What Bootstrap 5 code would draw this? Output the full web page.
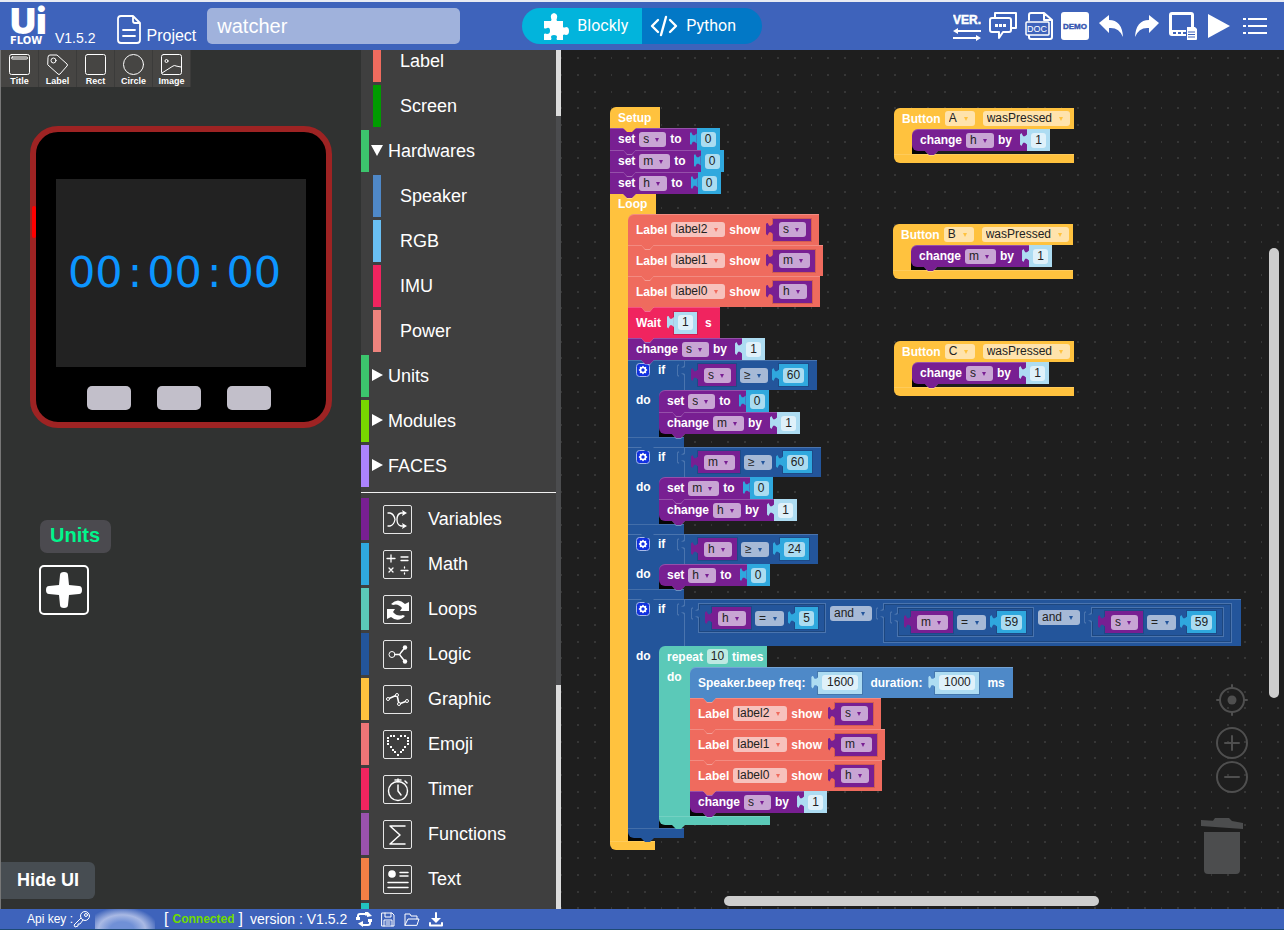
<!DOCTYPE html>
<html lang="en">
<head>
<meta charset="utf-8">
<meta name="viewport" content="width=device-width, initial-scale=1">
<title>UiFlow</title>
<link href="https://cdn.jsdelivr.net/npm/bootstrap@5.3.0/dist/css/bootstrap.min.css" rel="stylesheet">
<style>
body{font-family:"Liberation Sans",Arial,sans-serif;color:#fff;background:#1e1e1e;overflow:hidden}
svg{display:block;flex:none}
button{font-family:inherit}
.plain{background:none;border:0;padding:0;color:inherit}
.line{fill:none;stroke:currentColor;stroke-linecap:round;stroke-linejoin:round}
/* top bar */
.topbar{height:50px;background:#3e63bb;border-top:2px solid #e8ebf3;padding:0 15px 0 10px}
.logo-ui{font:900 36px/28px Inter,sans-serif}
.logo-flow{font:700 10px/10px "DejaVu Sans",sans-serif}
.logo{width:45px;color:#fff;text-decoration:none;gap:1px}
.ver{font-size:14px;line-height:16px}
.proj-btn{margin:0 0 6px 22px;gap:5px}
.proj{font-size:16px;line-height:20px;margin-bottom:-2px}
.name-box{width:253px;height:36px;margin-left:11px;background:#a0b2dc;border:0;border-radius:5px;color:#fff;font-size:20px;padding:0 10px}
.mode{width:120px;height:36px;font:16px/20px Roboto,sans-serif;color:#fff;border:0;border-radius:0}
.mode-a{background:#02b4dc;border-radius:18px 0 0 18px}
.mode-b{background:#0278c6;border-radius:0 18px 18px 0}
.mode-wrap{margin-left:62px}
/* designer */
.designer{width:361px;background:#303231;border-left:1px solid #777}
.tile{width:38px;height:37px;background:#464543;border:0;border-right:1px solid #3b3b3a;color:#fff;font-size:9px;font-weight:700;line-height:10px;padding:4px 0 0;gap:1px}
.device{width:302px;height:302px;margin:39px 0 0 29px;background:#000;border:6px solid #9e2323;border-radius:28px;padding-top:47px}
.power{left:-4px;top:74px;width:4px;height:32px;background:#f00;border-radius:2px}
.lcd{width:250px;height:188px;background:#222;padding:0 0 2px 12px;color:#0c95ff;font:43px/50px "DejaVu Sans",sans-serif;gap:5px}
.keys{margin-top:19px;gap:26px}
.key{width:44px;height:24px;background:#c2bfca;border:0;border-radius:5px}
.units{margin:92px 0 12px 39px;padding:0 11px 0 10px;height:33px;background:#4b4a4f;border-radius:7px;color:#00f68c;font-size:20px;line-height:30px;font-weight:700}
.add{width:50px;height:50px;margin-left:38px;border:2px solid #fff;border-radius:5px}
.hide-ui{width:94px;height:37px;margin-bottom:10px;background:#474d52;border-radius:0 6px 6px 0;font-size:18px;font-weight:700}
/* toolbox */
.toolbox{width:200px;background:#3f3f3f}
.tree{margin-top:-10px}
.cat{height:45px;color:#fff;text-decoration:none;font-size:18px;line-height:20px}
.cat:hover{color:#fff}
.cat i{width:8px;height:42px;background:var(--k);margin-right:2px;flex:none}
.cat.kid{padding-left:12px}
.cat.kid i{margin-right:19px}
.cat .arrow{width:14px;margin-right:3px}
.cat .pic{margin:0 16px 2px 12px;width:29px;height:29px;border:1px solid #e6e6e6;border-radius:2px;display:flex;align-items:center;justify-content:center}
.cat .cap{padding-bottom:3px}
.rule{height:1px;background:#f2f2f2;margin:2px 0 5px}
.scroll{width:5px;background:#4b4c4e}
.scroll b{background:#dcdcdc}
/* workspace */
.space{background:#1e1e1e url("data:image/svg+xml,%3Csvg xmlns='http://www.w3.org/2000/svg' width='50' height='50' fill='%23363636'%3E%3Cpath d='M0 7h1v2H0zM16 7h2v2h-2zM33 7h2v2h-2zM0 24h1v2H0zM16 24h2v2h-2zM33 24h2v2h-2zM0 41h1v2H0zM16 41h2v2h-2zM33 41h2v2h-2z'/%3E%3C/svg%3E")}
.stack{position:absolute;font-size:12px;font-weight:700;line-height:14px;white-space:nowrap}
.yel{--c:#ffc23e;--f:#ffe3ac}
.pur{--c:#781f92;--f:#c8a5d4}
.cor{--c:#ef6b5e;--f:#f7c2bd}
.num{--c:#2fa8de;--f:#aadcf1}
.dft{--c:#addcf2;--f:#dff1fa}
.wai{--c:#f0245f;--f:#f9a7bf}
.lgc{--c:#23559b;--f:#a6b9d6}
.rep{--c:#5bc9b8;--f:#bde9e2}
.spk{--c:#4e89c8;--f:#b8d0e9}
.st{position:relative;display:flex;align-items:center;gap:4px;width:max-content;height:22px;padding-left:8px;background:var(--c);box-shadow:inset 0 1px 0 rgba(255,255,255,.22)}
.st.tall{height:31px;padding-right:8px}
.st::before,.st::after,.foot.nub::after{content:"";position:absolute;left:13px;bottom:-4px;width:13px;height:4px;z-index:2;background:rgba(255,255,255,.35);clip-path:polygon(0 0,100% 0,69% 100%,31% 100%)}
.st::before{bottom:-5px;height:5px}
.st::after,.foot.nub::after{background:var(--c)}
.head{height:21px;display:flex;align-items:center;gap:4px;width:max-content;padding:0 9px 0 8px;background:var(--c);position:relative}
.head.low{height:20px}
.head.hat{border-top-left-radius:6px}
.head.nub::after{content:"";position:absolute;left:13px;bottom:-4px;width:13px;height:4px;z-index:2;background:var(--c);clip-path:polygon(0 0,100% 0,69% 100%,31% 100%)}
.arm{width:18px;background:var(--c);flex:none;line-height:20px}
.arm.mid{width:31px;padding-left:8px}
.mouth{padding-bottom:3px;background:linear-gradient(var(--c),var(--c)) 0 0/8px 8px no-repeat,linear-gradient(#060606,#060606) 0 100%/24px 9px no-repeat}
.mouth>.st:last-child{border-bottom-left-radius:6px}
.mouth>.st:first-child,.mouth>.cb:first-child>.head{border-top-left-radius:6px}
.foot{height:9px;background:var(--c);position:relative;box-shadow:inset 0 1px 0 rgba(255,255,255,.15)}
.foot.end{border-bottom-left-radius:6px}
.foot.w45{width:45px}.foot.w56{width:56px;height:10px}.foot.w111{width:111px}
.v{position:relative;display:flex;align-items:center;height:22px;gap:4px;margin-left:7px;padding:0 5px 0 6px;background:var(--c);box-shadow:0 0 0 1px rgba(0,0,0,.13)}
.v::before{content:"";position:absolute;left:-7px;top:4px;width:7px;height:13px;background:var(--c);clip-path:polygon(100% 12%,70% 25%,45% 25%,20% 0,0 12%,0 88%,20% 100%,45% 75%,70% 75%,100% 88%)}
.v.num,.v.dft{padding:0 4px}
.t+.v{margin-left:9px}
.st:not(.tall)>.t+.v{margin-left:11px;box-shadow:none}
.cmp{height:30px;padding:0 8px 0 7px;box-shadow:inset 0 0 0 1px #4a74ae,inset 0 0 0 2px #1d4780}
.cmp.bare{margin:0;padding-right:9px;box-shadow:inset 0 1px 0 #4a74ae,inset 1px 0 0 #4a74ae}
.cmp.deep{height:40px;align-items:flex-start;padding-top:4px}
.cmp.root{height:47px;align-items:flex-start;padding-top:4px}
.op{margin-top:3px}
.cmp::before{background:#4a74ae}
.cmp::after{content:"";position:absolute;left:-6px;top:5px;width:8px;height:11px;background:var(--c);clip-path:polygon(100% 12%,70% 25%,45% 25%,20% 0,0 12%,0 88%,20% 100%,45% 75%,70% 75%,100% 88%)}
.if{width:56px;padding:3px 0 0 8px;gap:8px;background:var(--c);box-shadow:inset 0 1px 0 #4a74ae}
.stack select,.stack input{height:15px;border:0;border-radius:3px;background:var(--f);color:#222;font:12px/15px "Liberation Sans",Arial,sans-serif;padding:0;outline:0}
.stack select{appearance:none;padding:0 17px 0 4px}
.stack .d{position:relative;display:inline-flex}
.d::after{content:"";position:absolute;right:7px;top:6px;border:solid transparent;border-width:4px 2px 0;border-top-color:var(--c);pointer-events:none}
.stack input{text-align:center;width:15px}
.stack input.n2{width:21px}
.stack input.n4{width:36px}
.bar-v{right:5px;top:23%;width:10px;height:450px;border-radius:5px;background:#cecece}
.bar-h{left:163px;bottom:3px;width:375px;height:10px;border-radius:5px;background:#cecece}
.tools{right:36px;bottom:34px;width:46px;color:#4f4f4f}
/* status bar */
.status{height:21px;background:#3e63bb;border-bottom:1px solid #1e4a74;font-size:12px;line-height:16px;padding-left:27px}
.smear{width:60px;height:20px;background:radial-gradient(ellipse at 45% 100%,#7090d6 0 25%,#a9b9e4 50%,#5d7cc6 70%,transparent 78%);margin-right:9px}
</style>
</head>
<body class="vh-100 d-flex flex-column">

<header class="topbar d-flex align-items-center flex-shrink-0">
  <a href="#" class="logo d-flex flex-column"><span class="logo-ui">Ui</span><span class="logo-flow">FLOW</span></a>
  <span class="ver align-self-end mb-1">V1.5.2</span>
  <button class="plain proj-btn d-flex align-items-end align-self-end">
    <svg width="24" height="29" viewBox="0 0 24 29" class="line" stroke-width="1.8"><path d="M16 1H4a3 3 0 0 0-3 3v21a3 3 0 0 0 3 3h16a3 3 0 0 0 3-3V8zM16 1v5q0 2 2 2h5M6 15h12M6 21h12"/></svg>
    <span class="proj">Project</span>
  </button>
  <input class="name-box" value="watcher" aria-label="Project name">
  <div class="mode-wrap d-flex">
    <button class="mode mode-a d-flex align-items-center ps-3 pe-0"><svg class="ms-1 me-2" width="27" height="27" viewBox="0 0 27 27" fill="#fff"><path d="M2 8h7q1-1 0-3Q8 1 12 0q4 1 3 5-1 2 0 3h6v6q1 1 3 0 3 0 3 4 0 4-3 4-2-1-3 0v5h-6q-1-1 0-3 0-2-3-2t-3 2q1 2 0 3H2v-6q1-1 3 0 3 0 3-3 0-4-3-3-2 1-3 0z"/></svg>Blockly</button>
    <button class="mode mode-b d-flex align-items-center ps-2 pe-0"><svg class="me-2" width="28" height="22" viewBox="0 0 28 22"><path class="line" stroke-width="2.4" d="M8 5 2 11l6 6M20 5l6 6-6 6M16 2l-5 18"/></svg>Python</button>
  </div>
  <nav class="d-flex align-items-center gap-2 ms-auto" aria-label="Tools">
    <button class="plain" aria-label="Version"><svg width="28" height="30" viewBox="0 0 28 30"><text x="0" y="13" fill="#fff" stroke="#fff" stroke-width=".5" font-family="Liberation Sans,sans-serif" font-weight="700" font-size="12">VER.</text><g fill="#fff"><path d="M0 20l5-3v2h23v2H5v2zM28 27l-5-3v2H0v2h23v2z"/></g></svg></button>
    <button class="plain" aria-label="Feedback"><svg width="28" height="28" viewBox="0 0 28 28"><path class="line" stroke-width="2" d="M6 5V1h21v15h-4M3 6h17q2 0 2 2v10q0 2-2 2h-6l-4 6v-6H3q-2 0-2-2V8q0-2 2-2z"/><path fill="#fff" d="M6 12h3v3H6zM10 12h3v3h-3zM14 12h3v3h-3z"/></svg></button>
    <button class="plain" aria-label="Documents"><svg width="28" height="28" viewBox="0 0 28 28"><path class="line" stroke-width="2" d="M4 8V3q0-2 2-2h13l8 7v17q0 2-2 2H6q-2 0-2-2v-2M19 1v7h8"/><rect x="1" y="10" width="23" height="13" rx="1" fill="#3e63bb" stroke="#fff" stroke-width="1.5"/><text x="2" y="20" fill="#fff" font-family="Liberation Sans,sans-serif" font-size="9">DOC</text></svg></button>
    <button class="plain" aria-label="Demo"><svg width="28" height="28" viewBox="0 0 28 28"><rect width="28" height="28" rx="3" fill="#fff"/><text x="14" y="17" text-anchor="middle" fill="#3454b0" stroke="#3454b0" stroke-width=".4" font-family="Liberation Sans,sans-serif" font-weight="700" font-size="8">DEMO</text></svg></button>
    <button class="plain" aria-label="Undo"><svg width="28" height="28" viewBox="0 0 28 28"><path fill="#fff" d="M2 11 12 3v5q13 0 14 17-4-10-14-9v5z"/></svg></button>
    <button class="plain" aria-label="Redo"><svg width="28" height="28" viewBox="0 0 28 28"><path fill="#fff" d="M26 11 16 3v5Q3 8 2 25q4-10 14-9v5z"/></svg></button>
    <button class="plain" aria-label="Device"><svg width="28" height="28" viewBox="0 0 28 28"><path fill="#fff" fill-rule="evenodd" d="M3 0h19q3 0 3 3v12h-3V3H3v15h14v6H3q-3 0-3-3V3q0-3 3-3zM4 20v2h3v-2zM9 20v2h3v-2zM14 20v2h3v-2z"/><path fill="#fff" d="M18 15h8l2 2v10q0 1-1 1h-9z"/><path stroke="#3e63bb" d="M19 20h7M19 22.500h7M19 25h7"/></svg></button>
    <button class="plain" aria-label="Run"><svg width="28" height="28" viewBox="0 0 28 28"><path fill="#fff" d="M3 2v24l22-12z"/></svg></button>
    <button class="plain" aria-label="Menu"><svg width="28" height="28" viewBox="0 0 28 28"><path fill="#fff" d="M2 6h3v2H2zM2 13h3v2H2zM2 20h3v2H2zM7 6h19v2H7zM7 13h19v2H7zM7 20h19v2H7z"/></svg></button>
  </nav>
</header>

<main class="d-flex flex-fill overflow-hidden">
  <section class="designer d-flex flex-column align-items-start flex-shrink-0">
    <div class="d-flex">
      <button class="tile d-flex flex-column align-items-center"><svg width="21" height="21" viewBox="0 0 21 21"><rect class="line" x=".5" y=".5" width="20" height="20" rx="2"/><rect class="line" x="2.500" y="3" width="16" height="2" rx="1"/></svg><span>Title</span></button>
      <button class="tile d-flex flex-column align-items-center"><svg width="21" height="21" viewBox="0 0 21 21"><path class="line" d="M1 3q0-2 2-2h7l10 9q1 1 0 2l-7 8q-1 1-2 0L1 11z"/><circle class="line" cx="6.500" cy="6.500" r="2.500"/></svg><span>Label</span></button>
      <button class="tile d-flex flex-column align-items-center"><svg width="21" height="21" viewBox="0 0 21 21"><rect class="line" x=".5" y=".5" width="20" height="20" rx="2"/></svg><span>Rect</span></button>
      <button class="tile d-flex flex-column align-items-center"><svg width="21" height="21" viewBox="0 0 21 21"><circle class="line" cx="10.500" cy="10.500" r="10"/></svg><span>Circle</span></button>
      <button class="tile d-flex flex-column align-items-center"><svg width="21" height="21" viewBox="0 0 21 21"><rect class="line" x=".5" y=".5" width="20" height="20" rx="2"/><circle class="line" cx="5.500" cy="7" r="1.500"/><path class="line" d="M1 19l11-7q2-1 3 0l5 1"/></svg><span>Image</span></button>
    </div>
    <div class="device position-relative d-flex flex-column align-items-center">
      <span class="power position-absolute"></span>
      <div class="lcd d-flex align-items-center"><span>00</span><span>:</span><span>00</span><span>:</span><span>00</span></div>
      <div class="keys d-flex pe-1"><button class="key" aria-label="A"></button><button class="key" aria-label="B"></button><button class="key" aria-label="C"></button></div>
    </div>
    <div class="units">Units</div>
    <button class="plain add d-flex align-items-center justify-content-center" aria-label="Add unit"><svg width="36" height="36" viewBox="0 0 36 36" fill="#fff"><path d="M14 3q0-3 4-3t4 3l1 10v10l-1 10q0 3-4 3t-4-3l-1-10V13z"/><path d="M3 14q-3 0-3 4t3 4l10 1h10l10-1q3 0 3-4t-3-4l-10-1H13z"/></svg></button>
    <button class="plain hide-ui mt-auto">Hide UI</button>
  </section>

  <nav class="toolbox d-flex flex-shrink-0 overflow-hidden" aria-label="Toolbox">
    <div class="tree flex-fill">
      <a href="#" class="cat kid d-flex" style="--k:#ef6b5e"><i></i><span class="cap align-self-center">Label</span></a>
      <a href="#" class="cat kid d-flex" style="--k:#009c00"><i></i><span class="cap align-self-center">Screen</span></a>
      <a href="#" class="cat d-flex" style="--k:#3cc56d"><i></i><svg class="arrow" height="42" viewBox="0 0 14 42"><path fill="#fff" d="M0 15h12L6 26z"/></svg><span class="cap align-self-center">Hardwares</span></a>
      <a href="#" class="cat kid d-flex" style="--k:#4f88c7"><i></i><span class="cap align-self-center">Speaker</span></a>
      <a href="#" class="cat kid d-flex" style="--k:#69bff3"><i></i><span class="cap align-self-center">RGB</span></a>
      <a href="#" class="cat kid d-flex" style="--k:#f0245f"><i></i><span class="cap align-self-center">IMU</span></a>
      <a href="#" class="cat kid d-flex" style="--k:#ee837d"><i></i><span class="cap align-self-center">Power</span></a>
      <a href="#" class="cat d-flex" style="--k:#3cc56d"><i></i><svg class="arrow" height="42" viewBox="0 0 14 42"><path fill="#fff" d="M1 14v12l11-6z"/></svg><span class="cap align-self-center">Units</span></a>
      <a href="#" class="cat d-flex" style="--k:#78d800"><i></i><svg class="arrow" height="42" viewBox="0 0 14 42"><path fill="#fff" d="M1 14v12l11-6z"/></svg><span class="cap align-self-center">Modules</span></a>
      <a href="#" class="cat d-flex" style="--k:#ac83ff"><i></i><svg class="arrow" height="42" viewBox="0 0 14 42"><path fill="#fff" d="M1 14v12l11-6z"/></svg><span class="cap align-self-center">FACES</span></a>
      <div class="rule"></div>
      <a href="#" class="cat d-flex" style="--k:#781f92"><i></i><span class="pic align-self-center"><svg width="21" height="21" viewBox="0 0 21 21"><path class="line" stroke-width="1.300" d="M1 4h2q4 1 5 6.500Q7 16 3 17H1M17 4h-3q-4 1-4 6.500t4 6.500h3"/><path fill="#fff" d="M15 1l5 3-5 3 1-3zM15 14l5 3-5 3 1-3z"/></svg></span><span class="cap align-self-center">Variables</span></a>
      <a href="#" class="cat d-flex" style="--k:#2fa8de"><i></i><span class="pic align-self-center"><svg width="23" height="21" viewBox="0 0 23 21"><path class="line" stroke-width="1.300" d="M5 1v7M1 4.500h8M15 3h7M15 6.500h7M3 14l4 4M7 14l-4 4M15 16.500h7M18.500 13v1M18.500 19v1"/></svg></span><span class="cap align-self-center">Math</span></a>
      <a href="#" class="cat d-flex" style="--k:#5bc9b8"><i></i><span class="pic align-self-center"><svg width="22" height="20" viewBox="0 0 22 20"><path fill="#fff" d="M4 4q7-7 14 0l4-2v9h-9l2-3q-4-5-9-3zM0 9h8l-2 3q4 5 10 3l2 1q-7 7-14 1l-4 2z"/></svg></span><span class="cap align-self-center">Loops</span></a>
      <a href="#" class="cat d-flex" style="--k:#23559b"><i></i><span class="pic align-self-center"><svg width="20" height="19" viewBox="0 0 20 19"><circle class="line" cx="4" cy="9.500" r="3"/><path class="line" stroke-width="1.500" d="M7 9.500h4q1 0 2-2l4-5M11 9.500q1 0 2 2l4 5"/><circle cx="17" cy="2.500" r="2.200" fill="#fff"/><circle cx="17" cy="16.500" r="2.200" fill="#fff"/></svg></span><span class="cap align-self-center">Logic</span></a>
      <a href="#" class="cat d-flex" style="--k:#ffc23e"><i></i><span class="pic align-self-center"><svg width="23" height="14" viewBox="0 0 23 14"><path class="line" stroke-width="1.600" d="M2 6l9-4 2 9 8-3"/><g fill="#3f3f3f" stroke="#fff"><circle cx="2" cy="6" r="1.500"/><circle cx="11" cy="2" r="1.500"/><circle cx="13" cy="11" r="1.500"/><circle cx="21" cy="8" r="1.500"/></g></svg></span><span class="cap align-self-center">Graphic</span></a>
      <a href="#" class="cat d-flex" style="--k:#ee7577"><i></i><span class="pic align-self-center"><svg width="22" height="22" viewBox="0 0 22 22"><path fill="#fff" d="M3 1h2v2H3zM6 1h2v2H6zM13 1h2v2h-2zM17 1h2v2h-2zM0 3h2v2H0zM0 6h2v2H0zM0 9h2v2H0zM20 3h2v2h-2zM20 6h2v2h-2zM20 9h2v2h-2zM10 4h2v2h-2zM3 12h2v2H3zM17 12h2v2h-2zM5 15h2v2H5zM15 15h2v2h-2zM7 17h2v2H7zM13 17h2v2h-2zM10 20h2v2h-2z"/></svg></span><span class="cap align-self-center">Emoji</span></a>
      <a href="#" class="cat d-flex" style="--k:#f0245f"><i></i><span class="pic align-self-center"><svg width="22" height="24" viewBox="0 0 22 24"><circle class="line" stroke-width="1.400" cx="11" cy="13" r="9.500"/><path class="line" stroke-width="1.500" d="M11 1v3M8 2h6M11 7v6l3 4M18 3l2 2"/></svg></span><span class="cap align-self-center">Timer</span></a>
      <a href="#" class="cat d-flex" style="--k:#9a52ad"><i></i><span class="pic align-self-center"><svg width="17" height="20" viewBox="0 0 17 20"><path class="line" stroke-width="1.500" d="M16 1H1l10 9L1 19h15"/></svg></span><span class="cap align-self-center">Functions</span></a>
      <a href="#" class="cat d-flex" style="--k:#f38045"><i></i><span class="pic align-self-center"><svg width="22" height="20" viewBox="0 0 22 20"><circle cx="5" cy="4" r="3.800" fill="#fff"/><path class="line" stroke-width="1.500" d="M13 2.500h8M13 6h8M1 12.500h20M1 17.500h20"/></svg></span><span class="cap align-self-center">Text</span></a>
      <a href="#" class="cat d-flex" style="--k:#22c4c0" aria-label="More"><i></i></a>
    </div>
    <div class="scroll d-flex flex-column"><b style="flex:66"></b><span style="flex:569"></span><b style="flex:224"></b></div>
  </nav>

  <section class="space position-relative flex-fill overflow-hidden">
    <!-- main program -->
    <div class="stack" style="left:49px;top:57px">
      <div class="yel head hat nub"><span>Setup</span></div>
      <div class="pur st"><span>set</span><span class="d"><select aria-label="variable"><option>s</option></select></span><span class="t">to</span><span class="v num"><input value="0" aria-label="number"></span></div>
      <div class="pur st"><span>set</span><span class="d"><select aria-label="variable"><option>m</option></select></span><span class="t">to</span><span class="v num"><input value="0" aria-label="number"></span></div>
      <div class="pur st"><span>set</span><span class="d"><select aria-label="variable"><option>h</option></select></span><span class="t">to</span><span class="v num"><input value="0" aria-label="number"></span></div>
      <div class="cb yel">
        <div class="head low">Loop</div>
        <div class="d-flex">
          <div class="arm"></div>
          <div class="mouth">
            <div class="cor st tall"><span>Label</span><span class="d"><select aria-label="label"><option>label2</option></select></span><span class="t">show</span><span class="v pur"><span class="d"><select aria-label="variable"><option>s</option></select></span></span></div>
            <div class="cor st tall"><span>Label</span><span class="d"><select aria-label="label"><option>label1</option></select></span><span class="t">show</span><span class="v pur"><span class="d"><select aria-label="variable"><option>m</option></select></span></span></div>
            <div class="cor st tall"><span>Label</span><span class="d"><select aria-label="label"><option>label0</option></select></span><span class="t">show</span><span class="v pur"><span class="d"><select aria-label="variable"><option>h</option></select></span></span></div>
            <div class="wai st tall"><span class="t">Wait</span><span class="v dft"><input value="1" aria-label="seconds"></span><span class="ms-1">s</span></div>
            <div class="pur st"><span>change</span><span class="d"><select aria-label="variable"><option>s</option></select></span><span class="t">by</span><span class="v dft"><input value="1" aria-label="number"></span></div>

            <div class="cb lgc">
              <div class="d-flex"><div class="if d-flex"><svg width="14" height="14" viewBox="0 0 14 14"><rect x=".5" y=".5" width="13" height="13" rx="3" fill="#1030e0" stroke="#a9bbe8"/><path d="M7 2.500l1.200 1.600 2-.4-.1 2L11.500 7l-1.400 1.300.1 2-2-.4L7 11.500 5.800 9.900l-2 .4.100-2L2.500 7l1.400-1.300-.1-2 2 .4z" fill="#fff"/><circle cx="7" cy="7" r="1.700" fill="#1030e0"/></svg><span>if</span></div>
                <div class="v cmp bare"><span class="v pur"><span class="d"><select aria-label="variable"><option>s</option></select></span></span><span class="d"><select aria-label="operator"><option>≥</option></select></span><span class="v num"><input class="n2" value="60" aria-label="number"></span></div></div>
              <div class="d-flex"><div class="arm mid">do</div><div class="mouth">
                <div class="pur st"><span>set</span><span class="d"><select aria-label="variable"><option>s</option></select></span><span class="t">to</span><span class="v num"><input value="0" aria-label="number"></span></div>
                <div class="pur st"><span>change</span><span class="d"><select aria-label="variable"><option>m</option></select></span><span class="t">by</span><span class="v dft"><input value="1" aria-label="number"></span></div>
              </div></div>
              <div class="foot w56 nub"></div>
            </div>

            <div class="cb lgc">
              <div class="d-flex"><div class="if d-flex"><svg width="14" height="14" viewBox="0 0 14 14"><rect x=".5" y=".5" width="13" height="13" rx="3" fill="#1030e0" stroke="#a9bbe8"/><path d="M7 2.500l1.200 1.600 2-.4-.1 2L11.500 7l-1.400 1.300.1 2-2-.4L7 11.500 5.800 9.900l-2 .4.100-2L2.500 7l1.400-1.300-.1-2 2 .4z" fill="#fff"/><circle cx="7" cy="7" r="1.700" fill="#1030e0"/></svg><span>if</span></div>
                <div class="v cmp bare"><span class="v pur"><span class="d"><select aria-label="variable"><option>m</option></select></span></span><span class="d"><select aria-label="operator"><option>≥</option></select></span><span class="v num"><input class="n2" value="60" aria-label="number"></span></div></div>
              <div class="d-flex"><div class="arm mid">do</div><div class="mouth">
                <div class="pur st"><span>set</span><span class="d"><select aria-label="variable"><option>m</option></select></span><span class="t">to</span><span class="v num"><input value="0" aria-label="number"></span></div>
                <div class="pur st"><span>change</span><span class="d"><select aria-label="variable"><option>h</option></select></span><span class="t">by</span><span class="v dft"><input value="1" aria-label="number"></span></div>
              </div></div>
              <div class="foot w56 nub"></div>
            </div>

            <div class="cb lgc">
              <div class="d-flex"><div class="if d-flex"><svg width="14" height="14" viewBox="0 0 14 14"><rect x=".5" y=".5" width="13" height="13" rx="3" fill="#1030e0" stroke="#a9bbe8"/><path d="M7 2.500l1.200 1.600 2-.4-.1 2L11.500 7l-1.400 1.300.1 2-2-.4L7 11.500 5.800 9.900l-2 .4.100-2L2.500 7l1.400-1.300-.1-2 2 .4z" fill="#fff"/><circle cx="7" cy="7" r="1.700" fill="#1030e0"/></svg><span>if</span></div>
                <div class="v cmp bare"><span class="v pur"><span class="d"><select aria-label="variable"><option>h</option></select></span></span><span class="d"><select aria-label="operator"><option>≥</option></select></span><span class="v num"><input class="n2" value="24" aria-label="number"></span></div></div>
              <div class="d-flex"><div class="arm mid">do</div><div class="mouth">
                <div class="pur st"><span>set</span><span class="d"><select aria-label="variable"><option>h</option></select></span><span class="t">to</span><span class="v num"><input value="0" aria-label="number"></span></div>
              </div></div>
              <div class="foot w56 nub"></div>
            </div>

            <div class="cb lgc">
              <div class="d-flex"><div class="if d-flex"><svg width="14" height="14" viewBox="0 0 14 14"><rect x=".5" y=".5" width="13" height="13" rx="3" fill="#1030e0" stroke="#a9bbe8"/><path d="M7 2.500l1.200 1.600 2-.4-.1 2L11.500 7l-1.400 1.300.1 2-2-.4L7 11.500 5.800 9.900l-2 .4.100-2L2.500 7l1.400-1.300-.1-2 2 .4z" fill="#fff"/><circle cx="7" cy="7" r="1.700" fill="#1030e0"/></svg><span>if</span></div>
                <div class="v cmp bare root">
                  <div class="v cmp"><span class="v pur"><span class="d"><select aria-label="variable"><option>h</option></select></span></span><span class="d"><select aria-label="operator"><option>=</option></select></span><span class="v num"><input value="5" aria-label="number"></span></div>
                  <span class="d op"><select aria-label="operator"><option>and</option></select></span>
                  <div class="v cmp deep">
                    <div class="v cmp"><span class="v pur"><span class="d"><select aria-label="variable"><option>m</option></select></span></span><span class="d"><select aria-label="operator"><option>=</option></select></span><span class="v num"><input class="n2" value="59" aria-label="number"></span></div>
                    <span class="d op"><select aria-label="operator"><option>and</option></select></span>
                    <div class="v cmp"><span class="v pur"><span class="d"><select aria-label="variable"><option>s</option></select></span></span><span class="d"><select aria-label="operator"><option>=</option></select></span><span class="v num"><input class="n2" value="59" aria-label="number"></span></div>
                  </div>
                </div></div>
              <div class="d-flex"><div class="arm mid">do</div><div class="mouth">
                <div class="cb rep">
                  <div class="head pe-1"><span>repeat</span><input class="n2" value="10" aria-label="times"><span>times</span></div>
                  <div class="d-flex"><div class="arm mid">do</div><div class="mouth">
                    <div class="spk st tall"><span class="t">Speaker.beep freq:</span><span class="v dft"><input class="n4" value="1600" aria-label="frequency"></span><span class="t ms-1">duration:</span><span class="v dft"><input class="n4" value="1000" aria-label="duration"></span><span class="ms-1">ms</span></div>
                    <div class="cor st tall"><span>Label</span><span class="d"><select aria-label="label"><option>label2</option></select></span><span class="t">show</span><span class="v pur"><span class="d"><select aria-label="variable"><option>s</option></select></span></span></div>
                    <div class="cor st tall"><span>Label</span><span class="d"><select aria-label="label"><option>label1</option></select></span><span class="t">show</span><span class="v pur"><span class="d"><select aria-label="variable"><option>m</option></select></span></span></div>
                    <div class="cor st tall"><span>Label</span><span class="d"><select aria-label="label"><option>label0</option></select></span><span class="t">show</span><span class="v pur"><span class="d"><select aria-label="variable"><option>h</option></select></span></span></div>
                    <div class="pur st"><span>change</span><span class="d"><select aria-label="variable"><option>s</option></select></span><span class="t">by</span><span class="v dft"><input value="1" aria-label="number"></span></div>
                  </div></div>
                  <div class="foot w111 nub end"></div>
                </div>
              </div></div>
              <div class="foot w56 nub end"></div>
            </div>
          </div>
        </div>
        <div class="foot w45 end"></div>
      </div>
    </div>

    <!-- button events -->
    <div class="stack yel" style="left:333px;top:58px">
      <div class="head hat pe-1"><span>Button</span><span class="d"><select aria-label="button"><option>A</option></select></span><span class="d ms-1"><select aria-label="event"><option>wasPressed</option></select></span></div>
      <div class="d-flex"><div class="arm"></div><div class="mouth"><div class="pur st"><span>change</span><span class="d"><select aria-label="variable"><option>h</option></select></span><span class="t">by</span><span class="v dft"><input value="1" aria-label="number"></span></div></div></div>
      <div class="foot end"></div>
    </div>
    <div class="stack yel" style="left:332px;top:174px">
      <div class="head hat pe-1"><span>Button</span><span class="d"><select aria-label="button"><option>B</option></select></span><span class="d ms-1"><select aria-label="event"><option>wasPressed</option></select></span></div>
      <div class="d-flex"><div class="arm"></div><div class="mouth"><div class="pur st"><span>change</span><span class="d"><select aria-label="variable"><option>m</option></select></span><span class="t">by</span><span class="v dft"><input value="1" aria-label="number"></span></div></div></div>
      <div class="foot end"></div>
    </div>
    <div class="stack yel" style="left:333px;top:291px">
      <div class="head hat pe-1"><span>Button</span><span class="d"><select aria-label="button"><option>C</option></select></span><span class="d ms-1"><select aria-label="event"><option>wasPressed</option></select></span></div>
      <div class="d-flex"><div class="arm"></div><div class="mouth"><div class="pur st"><span>change</span><span class="d"><select aria-label="variable"><option>s</option></select></span><span class="t">by</span><span class="v dft"><input value="1" aria-label="number"></span></div></div></div>
      <div class="foot end"></div>
    </div>

    <div class="bar-v position-absolute"></div>
    <div class="bar-h position-absolute"></div>
    <div class="tools position-absolute d-flex flex-column align-items-end">
      <button class="plain" aria-label="Centre"><svg width="32" height="32" viewBox="0 0 32 32"><circle class="line" stroke-width="2" cx="16" cy="16" r="12"/><circle cx="16" cy="16" r="4.500" fill="currentColor"/><path class="line" stroke-width="2" d="M16 1v3M16 28v3M1 16h3M28 16h3"/></svg></button>
      <button class="plain" style="margin:11px 0 2px" aria-label="Zoom in"><svg width="32" height="32" viewBox="0 0 32 32"><circle class="line" stroke-width="2" cx="16" cy="16" r="15"/><path class="line" stroke-width="2" d="M16 9v14M9 16h14"/></svg></button>
      <button class="plain" aria-label="Zoom out"><svg width="32" height="32" viewBox="0 0 32 32"><circle class="line" stroke-width="2" cx="16" cy="16" r="15"/><path class="line" stroke-width="2" d="M9 16h14"/></svg></button>
      <button class="plain me-1" style="margin-top:24px" aria-label="Delete"><svg width="44" height="58" viewBox="0 0 44 58" fill="#4c4d4e"><path d="M1 3l12 .7L15 1h14l3 3 11 2V12L1 9zM4 15h36v38q0 4-4 4H8q-4 0-4-4z"/></svg></button>
    </div>
  </section>
</main>

<footer class="status d-flex align-items-center flex-shrink-0">
  <span>Api key :</span>
  <svg class="me-1" width="18" height="18" viewBox="0 0 18 18"><circle class="line" cx="12" cy="6" r="4.500"/><circle class="line" cx="13" cy="5" r="1.500"/><path class="line" d="M8 8l-7 7 1 2 3-1v-2h2l3-4"/></svg>
  <span class="smear"></span>
  <b class="fs-6 fw-normal me-1">[</b><b style="color:#6fdc00">Connected</b><b class="fs-6 fw-normal ms-1">]</b>
  <span class="ver" style="margin:0 9px 0 7px">version : V1.5.2</span>
  <button class="plain me-2" aria-label="Refresh"><svg width="16" height="15" viewBox="0 0 16 15"><path class="line" stroke-width="2" d="M2 6V4q0-2 2-2h5M14 9v2q0 2-2 2H7"/><path fill="#fff" d="M9 0h3l4 4-5 1V3.500H9zM7 15l-5-3.500L7 9zM0 5h4v3H0zM12 7h4v3h-4z"/></svg></button>
  <button class="plain me-2" aria-label="Save"><svg width="16" height="15" viewBox="0 0 16 15"><path class="line" d="M2 1h10l2 2v11H2zM5 1v4h6V1M4 14V8h8v6M6 10h4M6 12h4"/></svg></button>
  <button class="plain me-2" aria-label="Open"><svg width="16" height="15" viewBox="0 0 16 15"><path class="line" d="M1 13V2h5l1 2h6v3M1 13l3-6h11l-2 6z"/></svg></button>
  <button class="plain" aria-label="Download"><svg width="16" height="15" viewBox="0 0 16 15"><path class="line" stroke-width="2" d="M8 1v7M2 11v2.500h12V11"/><path fill="#fff" d="M3 6h10l-5 5z"/></svg></button>
</footer>

<script src="https://cdn.jsdelivr.net/npm/bootstrap@5.3.0/dist/js/bootstrap.bundle.min.js"></script>
</body>
</html>
